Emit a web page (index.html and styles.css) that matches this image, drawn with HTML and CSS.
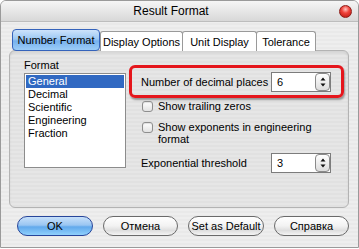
FILE: index.html
```html
<!DOCTYPE html>
<html lang="en">
<head>
    <meta charset="UTF-8">
    <title>Result Format</title>
    <link rel="stylesheet" href="styles.css">
</head>
<body>
<div class="window">

    <div class="titlebar">
        <span class="title">Result Format</span>
        <span class="close"></span>
    </div>

    <div class="tabs">
        <div class="tab active">Number Format</div>
        <div class="tab tab-display">Display Options</div>
        <div class="tab tab-unit">Unit Display</div>
        <div class="tab tab-tol">Tolerance</div>
    </div>

    <div class="panel">
        <div class="format-col">
            <div class="caption">Format</div>
            <ul class="list">
                <li class="selected">General</li>
                <li>Decimal</li>
                <li>Scientific</li>
                <li>Engineering</li>
                <li>Fraction</li>
            </ul>
        </div>

        <div class="options">
            <div class="row highlight">
                <span>Number of decimal places</span>
                <div class="spinner">
                    <span class="value">6</span>
                    <span class="stepper">
                        <svg width="12" height="16" viewBox="0 0 12 16"><path d="M3.5 6.5 L6 3.5 L8.5 6.5 Z M3.5 9.5 L6 12.5 L8.5 9.5 Z" fill="#111"/></svg>
                    </span>
                </div>
            </div>

            <div class="check">
                <span class="box"></span>
                <span class="check-text">Show trailing zeros</span>
            </div>

            <div class="check check-wrap">
                <span class="box"></span>
                <span class="check-text">Show exponents in engineering format</span>
            </div>

            <div class="row threshold">
                <span>Exponential threshold</span>
                <div class="spinner">
                    <span class="value">3</span>
                    <span class="stepper">
                        <svg width="12" height="16" viewBox="0 0 12 16"><path d="M3.5 6.5 L6 3.5 L8.5 6.5 Z M3.5 9.5 L6 12.5 L8.5 9.5 Z" fill="#111"/></svg>
                    </span>
                </div>
            </div>
        </div>
    </div>

    <div class="buttons">
        <button class="btn default btn-ok">OK</button>
        <button class="btn btn-cancel">Отмена</button>
        <button class="btn btn-set">Set as Default</button>
        <button class="btn btn-help">Справка</button>
    </div>

</div>
</body>
</html>
```

FILE: styles.css
```css
/* General reset */
body {
    margin: 0;
    padding: 0;
    background: #ffffff;
    font-family: "Liberation Sans", Arial, sans-serif;
    font-size: 11px;
    color: #000;
}

/* Dialog window */
.window {
    width: 359px;
    height: 248px;
    box-sizing: border-box;
    border: 1px solid #9a9a9a;
    border-radius: 6px 6px 0 0;
    overflow: hidden;
    background: repeating-linear-gradient(#eeeeee 0 2px, #e9e9e9 2px 4px);
}

/* Title bar */
.titlebar {
    display: flex;
    align-items: center;
    height: 21px;
    box-sizing: border-box;
    border-bottom: 1px solid #bdbdbd;
    background: linear-gradient(#f6f6f6, #d8d8d8);
}

.title {
    flex: 1;
    text-align: center;
    font-size: 12px;
    padding-left: 2px;
}

.close {
    width: 13px;
    height: 13px;
    box-sizing: border-box;
    margin-right: 6px;
    border-radius: 50%;
    border: 1px solid #8e1c18;
    background: radial-gradient(circle at 50% 30%, #ffc4c0 0, #f0443c 40%, #b3120c 100%);
}

/* Tabs */
.tabs {
    display: flex;
    align-items: flex-end;
    height: 22px;
    margin-top: 7px;
    margin-bottom: -1px;
    padding-left: 11px;
    position: relative;
    z-index: 1;
}

.tab {
    display: flex;
    align-items: center;
    justify-content: center;
    height: 20px;
    box-sizing: border-box;
    background: #ffffff;
    border: 1px solid #9a9a9a;
    border-bottom: none;
    border-radius: 3px 3px 0 0;
}

.tab.active {
    width: 88px;
    height: 22px;
    border: 1px solid #3563bb;
    border-radius: 4px;
    background: linear-gradient(#cde3fb 0%, #9cc8f3 45%, #76b1ee 55%, #9ccdf8 100%);
}

.tab-display { width: 83px; margin-left: 0; }
.tab-unit { width: 75px; margin-left: -1px; }
.tab-tol { width: 60px; margin-left: -1px; }

/* Main panel */
.panel {
    display: flex;
    align-items: flex-start;
    width: 340px;
    height: 158px;
    box-sizing: border-box;
    margin-left: 8px;
    padding: 8px 0 0 14px;
    border: 1px solid #b3b3b3;
    border-radius: 6px;
    background: repeating-linear-gradient(#e6e6e6 0 2px, #e1e1e1 2px 4px);
    box-shadow: inset 0 2px 2px rgba(0, 0, 0, 0.08);
}

.format-col {
    width: 102px;
}

.caption {
    line-height: 13px;
    height: 13px;
}

.list {
    list-style: none;
    margin: 1px 0 0 0;
    padding: 1px;
    height: 95px;
    box-sizing: border-box;
    background: #ffffff;
    border: 1px solid #8c8c8c;
}

.list li {
    height: 13px;
    line-height: 13px;
    padding-left: 2px;
}

.list li.selected {
    background: #3169c2;
    color: #ffffff;
}

/* Options column */
.options {
    display: flex;
    flex-direction: column;
    width: 215px;
    margin-left: 3px;
    margin-top: 6px;
}

.row {
    display: flex;
    align-items: center;
    justify-content: space-between;
}

.highlight {
    height: 33px;
    box-sizing: border-box;
    padding: 0 10px 0 9px;
    border: 3px solid #e5161c;
    border-radius: 6px;
    box-shadow: 1px 2px 2px rgba(0, 0, 0, 0.35);
}

.threshold {
    height: 20px;
    margin-top: 8px;
    padding: 0 13px 0 12px;
}

.spinner {
    display: flex;
    align-items: center;
    width: 60px;
    height: 20px;
    box-sizing: border-box;
    border: 1px solid #7c7c7c;
    background: #ffffff;
}

.spinner .value {
    flex: 1;
    padding-left: 5px;
}

.stepper {
    display: flex;
    align-items: center;
    justify-content: center;
    width: 15px;
    height: 18px;
    box-sizing: border-box;
    border: 1px solid #8a8a8a;
    border-radius: 4px;
    background: linear-gradient(#ffffff, #dcdcdc);
}

/* Checkboxes */
.check {
    display: flex;
    align-items: flex-start;
    margin-top: 2px;
    line-height: 12px;
}

.check-wrap {
    margin-top: 9px;
}

.box {
    width: 11px;
    height: 11px;
    box-sizing: border-box;
    margin: 1px 5px 0 13px;
    border: 1px solid #8e8e8e;
    border-radius: 3px;
    background: linear-gradient(#ffffff, #e2e2e2);
    box-shadow: inset 0 1px 1px rgba(0, 0, 0, 0.12);
}

.check-wrap .check-text {
    width: 170px;
}

/* Buttons */
.buttons {
    display: flex;
    gap: 10px;
    margin-top: 8px;
    padding-left: 16px;
}

.btn {
    height: 20px;
    padding: 0;
    font-family: inherit;
    font-size: 11px;
    color: #000;
    border: 1px solid #6a6a6a;
    border-radius: 10px;
    background: linear-gradient(#ffffff 0%, #f2f2f2 50%, #dedede 75%, #f4f4f4 100%);
}

.btn.default {
    border-color: #27459a;
    background: linear-gradient(#c7e0fa 0%, #9ac6f2 45%, #62a9ec 55%, #8fd0fc 100%);
}

.btn-ok { width: 76px; }
.btn-cancel { width: 75px; }
.btn-set { width: 76px; }
.btn-help { width: 75px; }
```
